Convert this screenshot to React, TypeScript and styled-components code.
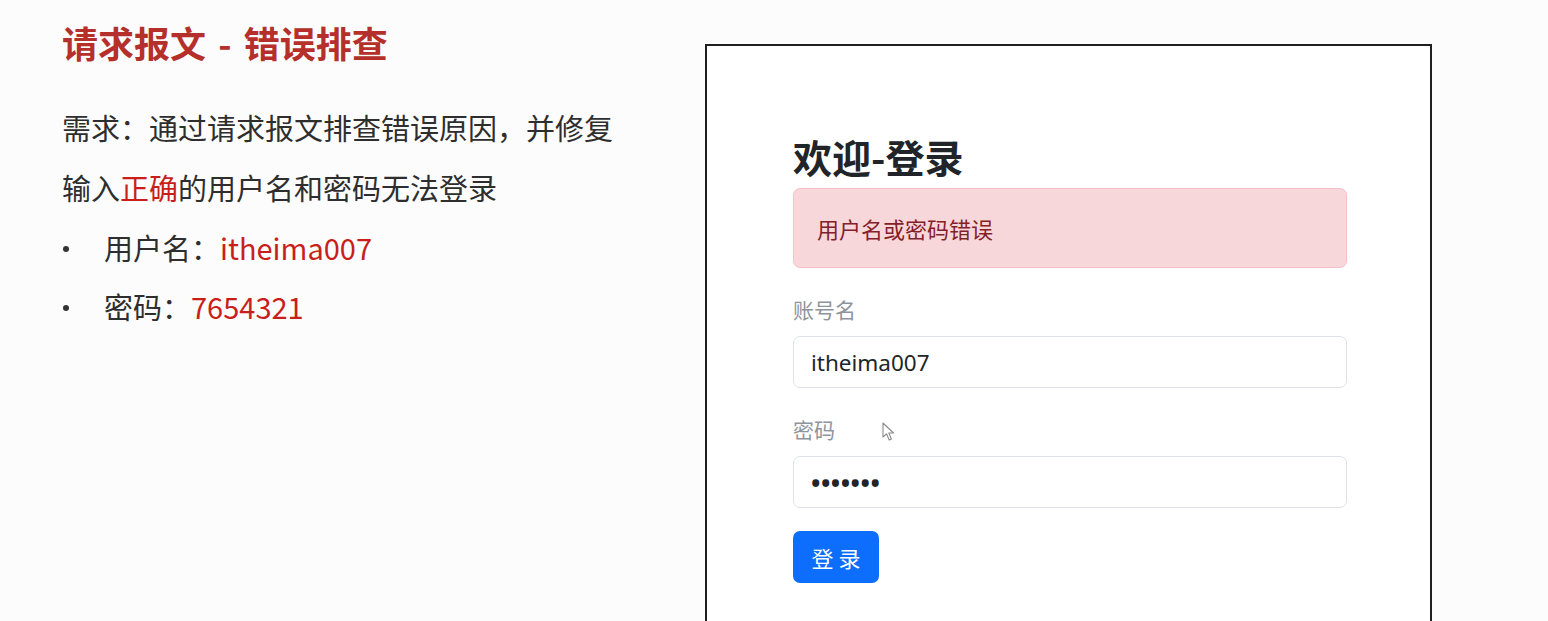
import styled, { createGlobalStyle } from "styled-components";

const GlobalStyle = createGlobalStyle`
  html, body {
    margin: 0;
    padding: 0;
    background: #fcfcfc;
    overflow: hidden;
  }
  * {
    box-sizing: border-box;
  }
`;

const CJK = `"Noto Sans CJK SC", "Noto Sans", sans-serif`;
const UI = `"Noto Sans", "Noto Sans CJK SC", sans-serif`;

const Slide = styled.div`
  width: 1548px;
  height: 621px;
  display: flex;
  overflow: hidden;
  font-family: ${CJK};
  color: #333;
`;

const Notes = styled.div`
  flex: 0 0 705px;
  padding: 12px 0 0 62px;
  display: flex;
  flex-direction: column;
`;

const Title = styled.h1`
  margin: 0 0 25px;
  font-size: 36px;
  line-height: 60px;
  font-weight: 700;
  color: #b5302b;
  word-spacing: 4px;
`;

const Line = styled.p`
  margin: 0;
  font-size: 29px;
  line-height: 60px;
  color: #2e2e2e;
`;

const Mark = styled.span`
  color: #c91f1b;
`;

const Bullets = styled.ul`
  margin: 0;
  padding: 0;
  list-style: none;
`;

const Bullet = styled.li`
  display: flex;
  align-items: center;
  height: 59px;
  font-size: 29px;
  color: #2e2e2e;
  &::before {
    content: "";
    width: 6px;
    height: 6px;
    border-radius: 50%;
    background: #333;
    margin: 4px 35px 0 1px;
  }
`;

const Frame = styled.div`
  position: relative;
  flex: 0 0 727px;
  margin-top: 44px;
  background: #fff;
  border: 2px solid #1f1f1f;
  border-bottom: none;
  padding: 87px 0 0 86px;
`;

const Form = styled.form`
  width: 554px;
  display: flex;
  flex-direction: column;
`;

const Heading = styled.h2`
  margin: 0 0 9px;
  font-family: ${CJK};
  font-size: 39px;
  line-height: 46px;
  font-weight: 700;
  color: #212529;
`;

const Alert = styled.div`
  height: 80px;
  display: flex;
  align-items: center;
  padding: 0 23px;
  margin-bottom: 23px;
  background: #f8d7da;
  border: 1px solid #f5c2c7;
  border-radius: 7px;
  font-size: 22px;
  color: #842029;
`;

const Field = styled.div`
  display: flex;
  flex-direction: column;
  margin-bottom: 23px;
`;

const Label = styled.label`
  font-size: 21px;
  line-height: 32px;
  margin: 2px 0 11px;
  color: #8e949b;
`;

const Input = styled.input<{ $dots?: boolean }>`
  height: 52px;
  padding: 0 17px;
  border: 1px solid #dee2e6;
  border-radius: 7px;
  background: #fff;
  font-family: ${UI};
  font-size: ${({ $dots }) => ($dots ? "25px" : "22.5px")};
  font-weight: ${({ $dots }) => ($dots ? 700 : 400)};
  letter-spacing: ${({ $dots }) => ($dots ? "0.5px" : "0")};
  color: #212529;
  outline: none;
`;

const Submit = styled.button`
  align-self: flex-start;
  width: 86px;
  height: 52px;
  border: none;
  border-radius: 7px;
  background: #0d6efd;
  color: #fff;
  font-family: ${CJK};
  font-size: 22px;
  letter-spacing: 5px;
  padding: 0 0 0 5px;
`;

const Pointer = styled.svg`
  position: absolute;
  left: 175px;
  top: 376px;
`;

export default function App() {
  return (
    <>
      <GlobalStyle />
      <Slide>
        <Notes>
          <Title>请求报文 - 错误排查</Title>
          <Line>需求：通过请求报文排查错误原因，并修复</Line>
          <Line>
            输入<Mark>正确</Mark>的用户名和密码无法登录
          </Line>
          <Bullets>
            <Bullet>
              用户名：<Mark>itheima007</Mark>
            </Bullet>
            <Bullet>
              密码：<Mark>7654321</Mark>
            </Bullet>
          </Bullets>
        </Notes>
        <Frame>
          <Form onSubmit={(e) => e.preventDefault()}>
            <Heading>欢迎-登录</Heading>
            <Alert>用户名或密码错误</Alert>
            <Field>
              <Label>账号名</Label>
              <Input defaultValue="itheima007" readOnly />
            </Field>
            <Field>
              <Label>密码</Label>
              <Input $dots defaultValue="•••••••" readOnly />
            </Field>
            <Submit type="submit">登录</Submit>
          </Form>
          <Pointer width="14" height="20" viewBox="0 0 14 20">
            <path
              d="M1 1 L1 15 L4.5 11.8 L7.2 18 L9.4 17 L6.8 11 L11.5 11 Z"
              fill="#fff"
              stroke="#8a8a8a"
              strokeWidth="1.1"
              strokeLinejoin="round"
            />
          </Pointer>
        </Frame>
      </Slide>
    </>
  );
}
